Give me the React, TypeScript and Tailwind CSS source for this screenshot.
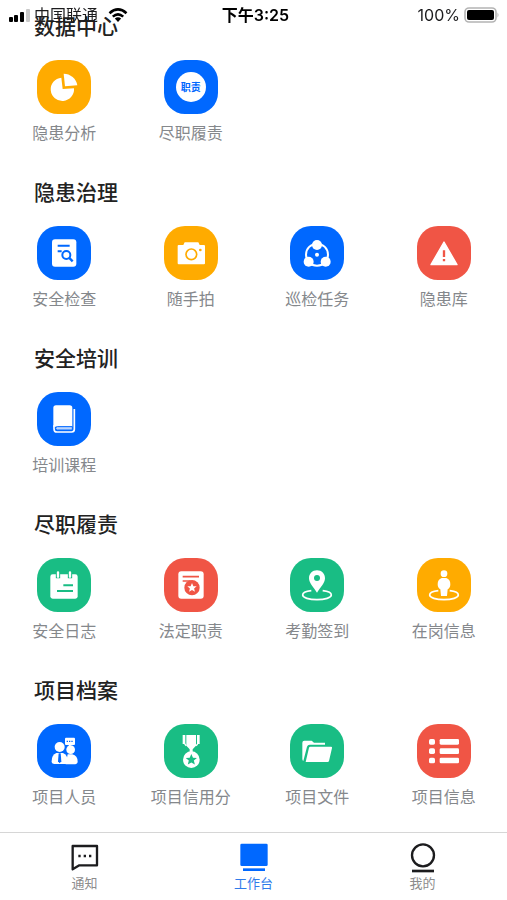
import type { ReactNode } from "react";
import clsx from "clsx";

type Tone = "blue" | "orange" | "green" | "red";

type Entry = {
  label: string;
  tone: Tone;
  icon: ReactNode;
};

type Section = {
  title: string;
  entries: Entry[];
};

const toneClass: Record<Tone, string> = {
  blue: "bg-[#0068ff] text-[#0068ff]",
  orange: "bg-[#ffab00] text-[#ffab00]",
  green: "bg-[#19bd84] text-[#19bd84]",
  red: "bg-[#f05545] text-[#f05545]",
};

// currentColor is the tile colour, used for cut-outs in the white shapes
function Glyph({ children }: { children: ReactNode }) {
  return (
    <svg viewBox="0 0 162 162" className="size-full" fill="#fff" aria-hidden="true">
      {children}
    </svg>
  );
}

const STAR = "M0 -14 L4.1 -4.6 L14 -4 L6.3 2.3 L8.8 12 L0 6.8 L-8.8 12 L-6.3 2.3 L-14 -4 L-4.1 -4.6 Z";

const PieIcon = (
  <Glyph>
    <path d="M73 53 L77 87 L111 85 A35 35 0 1 1 73 53 Z" />
    <path d="M80 41 A42 42 0 0 1 121 76 L84 79 Z" />
  </Glyph>
);

const DutyIcon = (
  <span className="flex size-[30px] items-center justify-center rounded-full bg-white text-[10px] leading-none font-bold">
    职责
  </span>
);

const InspectIcon = (
  <Glyph>
    <rect x="45" y="40" width="73" height="82" rx="9" />
    <g fill="none" stroke="currentColor" strokeWidth="6">
      <path d="M62 59 H98 M62 76 H74" />
      <circle cx="88" cy="87" r="12" />
      <path d="M96 95 L107 106" strokeWidth="7" />
    </g>
  </Glyph>
);

const CameraIcon = (
  <Glyph>
    <path d="M44 57 H58 L62 49 H103 L107 57 H120 Q123 57 123 60 V112 Q123 115 120 115 H44 Q41 115 41 112 V60 Q41 57 44 57 Z" />
    <circle cx="82" cy="85" r="16" fill="none" stroke="currentColor" strokeWidth="5" />
    <circle cx="109" cy="72" r="4" fill="currentColor" />
  </Glyph>
);

const PatrolIcon = (
  <Glyph>
    <circle cx="81" cy="86" r="33" fill="none" stroke="#fff" strokeWidth="6" />
    <circle cx="81" cy="57" r="15" />
    <circle cx="56" cy="107" r="15" />
    <circle cx="107" cy="107" r="15" />
    <circle cx="81" cy="86" r="6" />
  </Glyph>
);

const WarningIcon = (
  <Glyph>
    <path d="M81 48 L120 116 H42 Z" stroke="#fff" strokeWidth="4" strokeLinejoin="round" />
    <path d="M81 73 V93 M81 99 V106" stroke="currentColor" strokeWidth="7" />
  </Glyph>
);

const BookIcon = (
  <Glyph>
    <path d="M57 40 H98 Q106 40 106 48 V104 H49 V48 Q49 40 57 40 Z" />
    <path d="M112 51 V112 Q112 120 104 120 H60 Q51 120 51 110 V100" fill="none" stroke="#fff" strokeWidth="5" />
    <path d="M106 104 H61 Q56 104 56 109 Q56 114 61 114 H106 Z" fill="#b9d5ff" stroke="currentColor" strokeWidth="3" />
  </Glyph>
);

const LogIcon = (
  <Glyph>
    <rect x="40" y="49" width="82" height="73" rx="7" />
    <path d="M63 46 V61 M99 46 V61" stroke="currentColor" strokeWidth="13" />
    <path d="M63 43 V56 M99 43 V56" stroke="#fff" strokeWidth="7" strokeLinecap="round" />
    <path d="M79 82 H108 M60 99 H108" stroke="currentColor" strokeWidth="6" />
  </Glyph>
);

const LegalIcon = (
  <Glyph>
    <rect x="43" y="40" width="76" height="82" rx="9" />
    <path d="M56 56 H105 M56 69 H80" stroke="currentColor" strokeWidth="5" />
    <circle cx="84" cy="89" r="23" fill="currentColor" />
    <path d={STAR} transform="translate(84 89)" />
  </Glyph>
);

const orbit = (
  <path
    d="M64 98 C47 100 38 105 38 111 C38 119 57 125 81 125 C105 125 124 119 124 111 C124 105 115 100 98 98"
    fill="none"
    stroke="#fff"
    strokeWidth="5"
  />
);

const CheckInIcon = (
  <Glyph>
    {orbit}
    <path d="M81 37 C95 37 105 47 105 61 C105 76 91 88 81 104 C71 88 57 76 57 61 C57 47 67 37 81 37 Z" />
    <circle cx="81" cy="60" r="9" fill="currentColor" />
  </Glyph>
);

const OnDutyIcon = (
  <Glyph>
    {orbit}
    <circle cx="81" cy="47" r="10" />
    <path d="M74 60 H88 Q100 64 100 79 Q100 90 92 94 L90 114 H72 L70 94 Q62 90 62 79 Q62 64 74 60 Z" />
  </Glyph>
);

const PeopleIcon = (
  <Glyph>
    <rect x="84" y="41" width="30" height="22" rx="3" />
    <path d="M94 62 L98 68 L103 62 Z" />
    <path d="M89 52 H109" stroke="currentColor" strokeWidth="4" strokeDasharray="4 3" />
    <circle cx="101" cy="77" r="13" />
    <path d="M92 91 H106 Q122 95 122 113 Q122 121 110 121 H86 Z" />
    <circle cx="68" cy="69" r="15" />
    <path d="M58 87 H78 Q92 92 92 112 Q92 120 86 120 H52 Q44 120 44 112 Q44 92 58 87 Z" />
    <path d="M65 88 H71 L73 112 L68 118 L63 112 Z" fill="currentColor" />
  </Glyph>
);

const MedalIcon = (
  <Glyph>
    <path d="M56 33 H64 V60 H56 Z M99 33 H107 V60 H99 Z" />
    <path d="M67 33 H96 V65 L86 76 V84 H77 V76 L67 65 Z" />
    <path d="M62 60 L67 65 M101 60 L96 65" stroke="#fff" strokeWidth="4" />
    <circle cx="82" cy="107" r="25" />
    <path d={STAR} transform="translate(82 107) scale(1.2)" fill="currentColor" />
  </Glyph>
);

const FolderIcon = (
  <Glyph>
    <path d="M40 111 Q37 109 37 105 V56 Q37 50 43 50 H65 L72 56 H105 V62 H59 Q53 62 51 68 Z" />
    <path d="M61 68 H123 Q127 68 126 72 L117 111 Q116 114 113 114 H47 L57 71 Q58 68 61 68 Z" />
  </Glyph>
);

const ListIcon = (
  <Glyph>
    {[45, 73, 101].map((y) => (
      <g key={y}>
        <rect x="36" y={y} width="18" height="17" rx="5" />
        <rect x="68" y={y} width="58" height="17" rx="4" />
      </g>
    ))}
  </Glyph>
);

const sections: Section[] = [
  {
    title: "数据中心",
    entries: [
      { label: "隐患分析", tone: "orange", icon: PieIcon },
      { label: "尽职履责", tone: "blue", icon: DutyIcon },
    ],
  },
  {
    title: "隐患治理",
    entries: [
      { label: "安全检查", tone: "blue", icon: InspectIcon },
      { label: "随手拍", tone: "orange", icon: CameraIcon },
      { label: "巡检任务", tone: "blue", icon: PatrolIcon },
      { label: "隐患库", tone: "red", icon: WarningIcon },
    ],
  },
  {
    title: "安全培训",
    entries: [{ label: "培训课程", tone: "blue", icon: BookIcon }],
  },
  {
    title: "尽职履责",
    entries: [
      { label: "安全日志", tone: "green", icon: LogIcon },
      { label: "法定职责", tone: "red", icon: LegalIcon },
      { label: "考勤签到", tone: "green", icon: CheckInIcon },
      { label: "在岗信息", tone: "orange", icon: OnDutyIcon },
    ],
  },
  {
    title: "项目档案",
    entries: [
      { label: "项目人员", tone: "blue", icon: PeopleIcon },
      { label: "项目信用分", tone: "green", icon: MedalIcon },
      { label: "项目文件", tone: "green", icon: FolderIcon },
      { label: "项目信息", tone: "red", icon: ListIcon },
    ],
  },
];

const tabs = [
  {
    label: "通知",
    active: false,
    icon: (
      <>
        <path d="M5 9 H78 V67 H25 L5 79 Z" fill="none" stroke="#1c1c1e" strokeWidth="7" strokeLinejoin="round" />
        <path d="M22 39 H29 M38 39 H45 M54 39 H61" stroke="#1c1c1e" strokeWidth="7" />
      </>
    ),
  },
  {
    label: "工作台",
    active: true,
    icon: (
      <>
        <rect x="1" y="2" width="82" height="67" rx="4" fill="#0068ff" />
        <path d="M9 80 H75" stroke="#0068ff" strokeWidth="8" />
      </>
    ),
  },
  {
    label: "我的",
    active: false,
    icon: (
      <>
        <circle cx="42" cy="37" r="33" fill="none" stroke="#1c1c1e" strokeWidth="7" />
        <path d="M9 84 H75" stroke="#1c1c1e" strokeWidth="8" />
      </>
    ),
  },
];

function StatusBar() {
  return (
    <header className="fixed inset-x-0 top-0 z-10 grid h-[30px] grid-cols-3 items-center px-2 text-base text-[#1c1c1e]">
      <div className="flex items-center gap-1">
        <svg viewBox="0 0 22 14" className="w-[22px]" aria-hidden="true">
          <rect x="1" y="9" width="4" height="5" rx="1" />
          <rect x="6" y="7" width="4" height="7" rx="1" />
          <rect x="12" y="4" width="4" height="10" rx="1" />
          <rect x="18" y="1" width="4" height="13" rx="1" fill="#c8c8c8" />
        </svg>
        <span>中国联通</span>
        <svg viewBox="0 0 20 14" className="ml-1.5 w-5" fill="none" stroke="#000" strokeWidth="2.6" aria-hidden="true">
          <path d="M1.5 5.2 Q10 -2.4 18.5 5.2" />
          <path d="M4.8 8.6 Q10 4 15.2 8.6" />
          <path d="M6.8 10.6 Q10 8 13.2 10.6 L10 14 Z" fill="#000" stroke="none" />
        </svg>
      </div>
      <time className="pl-1 text-center font-semibold text-black">下午3:25</time>
      <div className="flex items-center justify-end gap-1">
        <span>100%</span>
        <svg viewBox="0 0 35 16" className="w-[35px]" aria-hidden="true">
          <rect x="1" y="1" width="31" height="14" rx="4" fill="#fff" stroke="#b4b4b4" strokeWidth="1.6" />
          <rect x="3" y="3" width="27" height="10" rx="2" />
          <path d="M33.5 5.5 Q35.5 8 33.5 10.5 Z" fill="#b4b4b4" />
        </svg>
      </div>
    </header>
  );
}

function EntryTile({ entry }: { entry: Entry }) {
  return (
    <a href="#" className="flex flex-col items-center gap-2">
      <span
        className={clsx(
          "flex size-[54px] items-center justify-center rounded-[21px]",
          toneClass[entry.tone]
        )}
      >
        {entry.icon}
      </span>
      <span className="text-base leading-[22px] text-[#85888c]">{entry.label}</span>
    </a>
  );
}

export default function App() {
  return (
    <div className="min-h-screen bg-white font-['Inter','Noto_Sans_CJK_SC',sans-serif]" lang="zh-CN">
      <StatusBar />

      <main className="flex flex-col gap-8 pt-[10px] pb-20 pl-px">
        {sections.map((section) => (
          <section key={section.title}>
            <h2 className="mb-4 pl-[33px] text-[21px] leading-[34px] font-medium text-[#222]">
              {section.title}
            </h2>
            <div className="grid grid-cols-4">
              {section.entries.map((entry) => (
                <EntryTile key={entry.label} entry={entry} />
              ))}
            </div>
          </section>
        ))}
      </main>

      <nav className="fixed inset-x-0 bottom-0 grid grid-cols-3 border-t border-[#d6d6d6] bg-white pt-[10px] pb-[7px]">
        {tabs.map((tab) => (
          <a
            key={tab.label}
            href="#"
            aria-current={tab.active ? "page" : undefined}
            className={clsx(
              "flex flex-col items-center text-[13px] leading-5",
              tab.active ? "text-[#2f7bea]" : "text-[#8c8c8c]"
            )}
          >
            <svg viewBox="0 0 84 90" className="h-[30px] w-7" aria-hidden="true">
              {tab.icon}
            </svg>
            {tab.label}
          </a>
        ))}
      </nav>
    </div>
  );
}
